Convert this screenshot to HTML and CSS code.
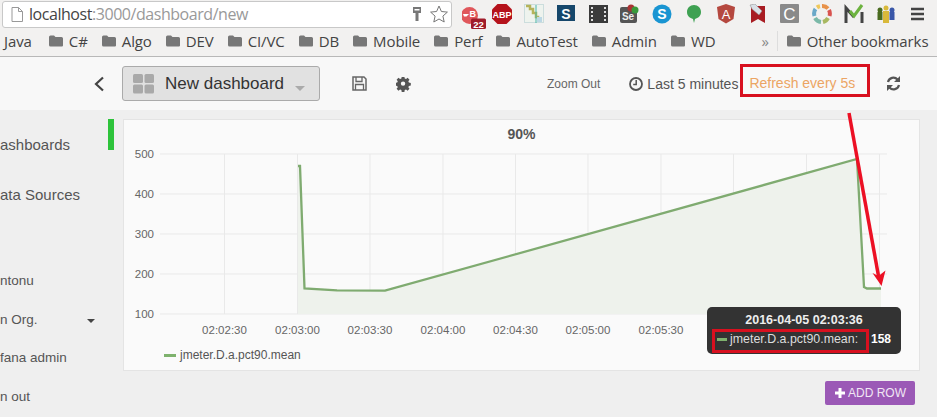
FILE: index.html
```html
<!DOCTYPE html>
<html>
<head>
<meta name="viewport" content="width=device-width, initial-scale=1">
<link rel="stylesheet" href="styles.css">
</head>
<body>

<svg class="defs">
  <symbol id="folder" viewBox="0 0 14 12"><path d="M0 2q0-1.500 1.500-1.500h3.500l1.500 1.500h6q1.500 0 1.500 1.500v7q0 1-1 1h-11.500q-1.500 0-1.500-1.500z" fill="#777"/></symbol>
</svg>

<div class="page">

<div class="toolbar">
  <div class="urlbox">
    <svg class="page-icon" width="12" height="15" viewBox="0 0 12 15"><path d="M1 .5h6.500l4 4v10h-10.500z M7.500 .5v4h4" fill="#fff" stroke="#999"/></svg>
    <span class="url"><span class="host">localhost</span>:3000/dashboard/new</span>
    <svg class="key" width="10" height="14" viewBox="0 0 10 14"><path d="M1 0h8v6h-2.500v8h-3v-8h-2.500z" fill="#777"/><rect x="2.500" y="2" width="5" height="1.500" fill="#fff"/></svg>
    <svg class="star" width="18" height="18" viewBox="0 0 18 18"><path d="M9 1l2.400 5.500 6 .6-4.500 4 1.300 5.900-5.200-3-5.200 3 1.300-5.900-4.500-4 6-.6z" fill="#fff" stroke="#777"/></svg>
  </div>
  <div class="extensions">
    <svg class="ext-badge" width="24" height="23" viewBox="0 0 24 23"><circle cx="7.500" cy="9.500" r="8.500" fill="#e0575b"/><path d="M1 8h6l-2.500 2.500h-2.500z" fill="#fff"/><text x="7.500" y="11" class="ext-bold" font-size="9" fill="#fff">B</text><rect x="9" y="12.500" width="15" height="10.500" rx="1.500" fill="#a01c2a"/><text x="16.500" y="21.500" text-anchor="middle" class="ext-bold" font-size="9.500" fill="#fff">22</text></svg>
    <svg width="22" height="22" viewBox="0 0 22 22"><path d="M6.500 1h9l5.500 5.500v9l-5.500 5.500h-9l-5.500-5.500v-9z" fill="#b5121b"/><text x="11" y="14.500" text-anchor="middle" class="ext-bold" font-size="9" fill="#fff">ABP</text></svg>
    <svg width="20" height="20" viewBox="0 0 20 20"><rect x=".5" y=".5" width="19" height="18" fill="#eef3ee" stroke="#cdd"/><path d="M2 2h4v3h3v4h3v4h2v2" fill="none" stroke="#b5b35a" stroke-width="2.500"/><path d="M12 1v18" stroke="#4bb5a5"/><rect x="13" y="13" width="5" height="5" fill="#bcd7e4"/></svg>
    <svg width="18" height="18" viewBox="0 0 18 18"><rect width="18" height="16" fill="#16476b"/><text x="9" y="13.500" text-anchor="middle" class="ext-bold" font-size="14" fill="#fff">S</text></svg>
    <svg width="19" height="18" viewBox="0 0 19 18"><rect width="19" height="18" fill="#3b3b3b"/><g fill="#ddd"><rect x="2" y="2" width="2" height="2"/><rect x="2" y="6" width="2" height="2"/><rect x="2" y="10" width="2" height="2"/><rect x="2" y="14" width="2" height="2"/><rect x="15" y="2" width="2" height="2"/><rect x="15" y="6" width="2" height="2"/><rect x="15" y="10" width="2" height="2"/><rect x="15" y="14" width="2" height="2"/></g></svg>
    <svg width="20" height="20" viewBox="0 0 20 20"><rect y="3" width="17" height="16" rx="2" fill="#555"/><text x="8" y="16" text-anchor="middle" class="ext-bold" font-size="10" fill="#eee">Se</text><circle cx="11" cy="4" r="3.500" fill="#a33"/><circle cx="15" cy="6" r="3.500" fill="#3a9a3a"/></svg>
    <svg width="20" height="20" viewBox="0 0 20 20"><circle cx="10" cy="10" r="9.500" fill="#1a95d2"/><text x="10" y="15" text-anchor="middle" class="ext-bold" font-size="14" fill="#fff">S</text></svg>
    <svg width="16" height="20" viewBox="0 0 16 20"><path d="M8 1c4 0 7 3 7 7s-3 6-6 7l-1 4-1-4c-3-1-6-3-6-7s3-7 7-7z" fill="#3fa152"/></svg>
    <svg width="20" height="20" viewBox="0 0 20 20"><path d="M10 0l9 3-1.500 12-7.500 4.500-7.500-4.500-1.500-12z" fill="#b5483f"/><text x="10" y="14.500" text-anchor="middle" class="ext-reg" font-size="13" fill="#fff">A</text></svg>
    <svg width="20" height="20" viewBox="0 0 20 20"><path d="M3 2h14v17l-7-4-7 4z" fill="#a81c22"/><path d="M2 1l5-1 7 7-3 4-7-6z" fill="#d9e0e6" stroke="#888" stroke-width=".5"/></svg>
    <svg width="20" height="20" viewBox="0 0 20 20"><rect width="19" height="19" rx="1" fill="#8a8a8a"/><text x="9.500" y="16" text-anchor="middle" class="ext-reg" font-size="17" fill="#fff">C</text></svg>
    <svg width="20" height="20" viewBox="0 0 20 20" fill="none" stroke-width="4"><path d="M10 2a8 8 0 0 1 6 2.500" stroke="#e8924a"/><path d="M17 6a8 8 0 0 1 .500 6" stroke="#d9534f"/><path d="M16 14a8 8 0 0 1-5 4" stroke="#a8b860"/><path d="M9 18a8 8 0 0 1-6-4" stroke="#7bb9a8"/><path d="M2.500 12a8 8 0 0 1 1-7" stroke="#6aa8c8"/><path d="M5 3.500a8 8 0 0 1 3-1.300" stroke="#efc85a"/></svg>
    <svg width="20" height="20" viewBox="0 0 20 20"><path d="M2 19v-15l8 9" fill="none" stroke="#444" stroke-width="3"/><path d="M18 8v11" stroke="#444" stroke-width="3"/><path d="M6 7l4 5 8-11" fill="none" stroke="#6db33f" stroke-width="3"/></svg>
    <svg width="20" height="20" viewBox="0 0 20 20"><circle cx="4" cy="6" r="2.500" fill="#4a6b1f"/><rect x="1.500" y="8" width="5" height="8" fill="#4a6b1f"/><circle cx="16" cy="6" r="2.500" fill="#3a57a8"/><rect x="13.500" y="8" width="5" height="8" fill="#3a57a8"/><circle cx="10" cy="4" r="2.500" fill="#d9b93a"/><rect x="7" y="7" width="6" height="12" fill="#d9b93a"/></svg>
    <svg width="14" height="14" viewBox="0 0 14 14"><path d="M0 2h13M0 7h13M0 12h13" stroke="#444" stroke-width="2.500"/></svg>
  </div>
</div>

<div class="bookmarks">
  <span class="mark first">Java</span>
  <span class="mark"><svg class="folder"><use href="#folder"/></svg>C#</span>
  <span class="mark"><svg class="folder"><use href="#folder"/></svg>Algo</span>
  <span class="mark"><svg class="folder"><use href="#folder"/></svg>DEV</span>
  <span class="mark"><svg class="folder"><use href="#folder"/></svg>CI/VC</span>
  <span class="mark"><svg class="folder"><use href="#folder"/></svg>DB</span>
  <span class="mark"><svg class="folder"><use href="#folder"/></svg>Mobile</span>
  <span class="mark"><svg class="folder"><use href="#folder"/></svg>Perf</span>
  <span class="mark"><svg class="folder"><use href="#folder"/></svg>AutoTest</span>
  <span class="mark"><svg class="folder"><use href="#folder"/></svg>Admin</span>
  <span class="mark"><svg class="folder"><use href="#folder"/></svg>WD</span>
  <span class="more">»</span>
  <span class="mark other"><svg class="folder"><use href="#folder"/></svg>Other bookmarks</span>
</div>

<div class="navbar">
  <svg class="back" width="12" height="16" viewBox="0 0 12 16"><path d="M10 1.500l-7 6.500 7 6.500" fill="none" stroke="#444" stroke-width="2.200"/></svg>
  <div class="dash-button">
    <svg width="21" height="20" viewBox="0 0 21 20"><g fill="#a9a9a9"><rect width="10" height="9" rx="1.500"/><rect x="11.500" width="9.500" height="9" rx="1.500"/><rect y="10.500" width="10" height="9" rx="1.500"/><rect x="11.500" y="10.500" width="9.500" height="9" rx="1.500"/></g></svg>
    <span class="dash-title">New dashboard</span>
    <span class="dash-caret"></span>
  </div>
  <svg class="save" width="15" height="15" viewBox="0 0 15 15"><path d="M1 1h11l2 2v11h-13z" fill="none" stroke="#666" stroke-width="1.500"/><path d="M4 1v4.500h6v-4.500M3.500 14v-5.500h8v5.500" fill="none" stroke="#666" stroke-width="1.300"/></svg>
  <svg class="gear" width="15" height="15" viewBox="0 0 16 16"><path fill-rule="evenodd" fill="#555" d="M6.500 0h3l.4 2.200 1.500.6 1.800-1.300 2.100 2.100-1.300 1.800.6 1.500 2.200.4v3l-2.200.4-.6 1.500 1.300 1.800-2.100 2.100-1.800-1.300-1.500.6-.4 2.200h-3l-.4-2.200-1.500-.6-1.800 1.300-2.100-2.100 1.300-1.800-.6-1.500-2.200-.4v-3l2.200-.4.600-1.500-1.300-1.800 2.100-2.100 1.800 1.300 1.500-.6z M8 5.500a2.500 2.500 0 1 0 0 5a2.500 2.500 0 1 0 0-5z" transform="translate(0 -.5) scale(.94)"/></svg>
  <span class="zoom-out">Zoom Out</span>
  <svg class="clock" width="14" height="14" viewBox="0 0 14 14"><circle cx="7" cy="7" r="6" fill="none" stroke="#555" stroke-width="1.800"/><path d="M7.200 3v4.500h-3" fill="none" stroke="#555" stroke-width="1.500"/></svg>
  <span class="range">Last 5 minutes</span>
  <span class="refresh">Refresh every 5s</span>
  <svg class="sync" width="15" height="15" viewBox="0 0 15 15"><path d="M2 6a5.500 5.500 0 0 1 9.500-2.500M13 9a5.500 5.500 0 0 1-9.500 2.500" fill="none" stroke="#555" stroke-width="2.200"/><path d="M14 0v6h-6zM1 15v-6h6z" fill="#555"/></svg>
</div>

<div class="main">
  <div class="sidebar">
    <div class="side-big">ashboards</div>
    <div class="side-big">ata Sources</div>
    <div class="side-small side-first">ntonu</div>
    <div class="side-small">n Org.<span class="side-caret"></span></div>
    <div class="side-small">fana admin</div>
    <div class="side-small">n out</div>
  </div>
  <div class="row-marker"></div>

  <div class="content">
    <div class="panel">
      <div class="panel-title">90%</div>
      <svg class="chart" width="795" height="192" viewBox="124 148 795 192">
        <g class="grid">
          <path d="M160 154H887M160 194H887M160 234H887M160 274H887M160 314H887"/>
          <path d="M224.500 154V314M297.500 154V314M370 154V314M443 154V314M515.500 154V314M588 154V314M661 154V314M733.500 154V314M806.500 154V314M879.500 154V314"/>
        </g>
        <path class="area" d="M298 166H300L304.500 288.300L337 290.300L385 290.700L857 159L864 287L867 288.500H881V314H298Z"/>
        <path class="line" d="M298 166H300L304.500 288.300L337 290.300L385 290.700L857 159L864 287L867 288.500H881"/>
        <g class="y-labels">
          <text x="154" y="158">500</text>
          <text x="154" y="198">400</text>
          <text x="154" y="238">300</text>
          <text x="154" y="278">200</text>
          <text x="154" y="318">100</text>
        </g>
        <g class="x-labels">
          <text x="224.500" y="334">02:02:30</text>
          <text x="297.500" y="334">02:03:00</text>
          <text x="370" y="334">02:03:30</text>
          <text x="443" y="334">02:04:00</text>
          <text x="515.500" y="334">02:04:30</text>
          <text x="588" y="334">02:05:00</text>
          <text x="661" y="334">02:05:30</text>
        </g>
      </svg>
      <div class="legend"><span class="swatch"></span>jmeter.D.a.pct90.mean</div>
      <div class="tooltip">
        <div class="tip-time">2016-04-05 02:03:36</div>
        <div class="tip-row">
          <span class="tip-series"><span class="swatch"></span>jmeter.D.a.pct90.mean:</span>
          <span class="tip-value">158</span>
        </div>
      </div>
    </div>
    <div class="actions">
      <div class="add-row"><svg width="10" height="10" viewBox="0 0 10 10"><path d="M5 0v10M0 5h10" stroke="#fff" stroke-width="3"/></svg>ADD ROW</div>
    </div>
  </div>
</div>

<svg class="arrow" width="60" height="190" viewBox="0 0 60 190">
  <path d="M9 2L38.500 165" stroke="#ec1024" stroke-width="3.500" fill="none"/>
  <path d="M41.500 175L32.500 162L38.500 165L45.500 159.500Z" fill="#ec1024"/>
</svg>

</div>

</body>
</html>
```

FILE: styles.css
```css
* {
  box-sizing: border-box;
}

html, body {
  margin: 0;
  padding: 0;
}

.defs {
  display: none;
}

.page {
  position: relative;
  width: 937px;
  height: 417px;
  overflow: hidden;
  background: #efefef;
  font-family: "Liberation Sans", Arial, sans-serif;
}

/* browser chrome */
.toolbar {
  display: flex;
  align-items: center;
  height: 28px;
  padding-left: 2px;
  background: #f2f1f0;
}

.urlbox {
  display: flex;
  align-items: center;
  width: 450px;
  height: 27px;
  padding: 0 3px 0 8px;
  background: #fff;
  border: 1px solid #c8c8c8;
  border-radius: 3px;
}

.page-icon {
  flex: none;
}

.url {
  flex: 1;
  margin-left: 6px;
  font-family: "Open Sans", sans-serif;
  font-size: 16px;
  letter-spacing: -0.45px;
  color: #999;
}

.host {
  color: #444;
}

.key {
  margin-right: 8px;
}

.extensions {
  display: grid;
  grid-template-columns: 25px repeat(14, 32px);
  align-items: center;
  justify-items: center;
  margin-left: 9px;
}

.ext-badge {
  margin-top: 6px;
}

.ext-bold {
  font-family: "Liberation Sans", sans-serif;
  font-weight: bold;
}

.ext-reg {
  font-family: "Liberation Sans", sans-serif;
}

.bookmarks {
  display: flex;
  align-items: center;
  gap: 14px;
  height: 29px;
  padding: 0 0 2px 4px;
  background: #f2f1f0;
  border-bottom: 1px solid #b8b8b8;
  font-family: "Open Sans", sans-serif;
  font-size: 15px;
  letter-spacing: -0.1px;
  color: #444;
}

.mark {
  display: flex;
  align-items: center;
  gap: 6px;
  white-space: nowrap;
}

.first {
  margin-right: 3px;
}

.folder {
  width: 14px;
  height: 12px;
}

.more {
  margin-left: 32px;
  padding-right: 8px;
  border-right: 1px solid #ddd;
  color: #888;
}

.other {
  margin-left: -5px;
}

/* dashboard top bar */
.navbar {
  display: flex;
  align-items: center;
  height: 53px;
  padding-left: 93px;
  background: #f8f8f8;
  color: #555;
}

.dash-button {
  display: flex;
  align-items: center;
  width: 198px;
  height: 35px;
  margin-left: 17px;
  padding-left: 10px;
  background: #e1e1e1;
  border: 1px solid #aaa;
  border-radius: 3px;
}

.dash-title {
  margin: 1px 0 0 11px;
  font-size: 17px;
  color: #333;
}

.dash-caret {
  width: 0;
  height: 0;
  margin: 10px 0 0 11px;
  border-left: 5px solid transparent;
  border-right: 5px solid transparent;
  border-top: 5px solid #aaa;
}

.save {
  margin-left: 32px;
}

.gear {
  margin: 1px 0 0 29px;
}

.zoom-out {
  margin-left: 136px;
  font-size: 12px;
  color: #666;
}

.clock {
  margin-left: 29px;
}

.range {
  margin-left: 4px;
  font-size: 14px;
}

.refresh {
  width: 130px;
  height: 33px;
  margin: -7px 0 0 2px;
  padding-left: 6px;
  line-height: 33px;
  border: 3px solid #d8101f;
  font-size: 14px;
  color: #eca563;
}

.sync {
  margin-left: 16px;
}

/* left menu and panels */
.main {
  display: flex;
  height: 307px;
}

.sidebar {
  width: 108px;
  padding-top: 10px;
  color: #555;
}

.side-big {
  height: 50px;
  line-height: 50px;
  font-size: 15px;
}

.side-small {
  position: relative;
  height: 38.700px;
  line-height: 38.700px;
  font-size: 13.500px;
}

.side-first {
  margin-top: 42px;
}

.side-caret {
  position: absolute;
  left: 87px;
  top: 18px;
  width: 0;
  height: 0;
  border-left: 4px solid transparent;
  border-right: 4px solid transparent;
  border-top: 4px solid #444;
}

.row-marker {
  width: 6px;
  height: 31px;
  margin-top: 9px;
  background: #2dc33a;
}

.content {
  width: 797px;
  margin-left: 9px;
  padding-top: 9px;
}

.panel {
  position: relative;
  width: 797px;
  height: 252px;
  background: #fafafa;
  border: 1px solid #e4e4e4;
}

.panel-title {
  height: 28px;
  line-height: 28px;
  text-align: center;
  font-size: 14px;
  font-weight: bold;
  color: #555;
}

.chart {
  display: block;
}

.grid path {
  fill: none;
  stroke: #e9e9e9;
  stroke-width: 1;
}

.area {
  fill: #eef2ec;
}

.line {
  fill: none;
  stroke: #7fab70;
  stroke-width: 2.300;
}

.y-labels text, .x-labels text {
  font-family: "Liberation Sans", sans-serif;
  font-size: 11.500px;
  fill: #666;
}

.y-labels text {
  text-anchor: end;
}

.x-labels text {
  text-anchor: middle;
}

.legend {
  display: flex;
  align-items: center;
  height: 30px;
  padding-left: 40px;
  font-size: 12px;
  color: #555;
}

.swatch {
  width: 12px;
  height: 3px;
  margin-right: 4px;
  background: #7eb26d;
}

.tooltip {
  position: absolute;
  left: 583px;
  top: 187px;
  width: 194px;
  height: 47px;
  padding-top: 5px;
  background: #333;
  border-radius: 5px;
  color: #fff;
  font-size: 12.400px;
}

.tip-time {
  height: 17px;
  line-height: 17px;
  text-align: center;
  font-weight: bold;
  font-size: 12.500px;
  color: #eee;
}

.tip-row {
  display: flex;
  align-items: center;
  padding-left: 5px;
}

.tip-series {
  display: flex;
  align-items: center;
  width: 157px;
  height: 24px;
  padding: 0 0 4px 2px;
  border: 3px solid #d8101f;
  color: #ddd;
}

.tip-series .swatch {
  width: 10px;
  margin-right: 3px;
}

.tip-value {
  margin: 0 0 5px 2px;
  font-weight: bold;
  font-size: 12px;
}

.actions {
  display: flex;
  justify-content: flex-end;
  padding: 10px 5px 0 0;
}

.add-row {
  display: flex;
  align-items: center;
  gap: 3px;
  width: 90px;
  height: 24px;
  padding-left: 10px;
  background: #9b59b6;
  border-radius: 2px;
  font-size: 12px;
  color: #f0e6f4;
}

/* annotation drawn over the screenshot */
.arrow {
  position: absolute;
  left: 840px;
  top: 111px;
}
```
